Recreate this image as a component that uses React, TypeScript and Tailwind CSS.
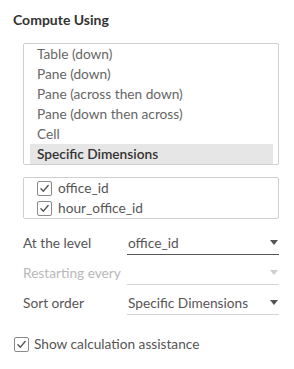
import React from "react";

const options = [
  "Table (down)",
  "Pane (down)",
  "Pane (across then down)",
  "Pane (down then across)",
  "Cell",
  "Specific Dimensions",
];

function Check() {
  return (
    <span className="flex h-[15px] w-[15px] shrink-0 items-center justify-center rounded-[2px] border border-[#8a8a8a] bg-white">
      <svg width="11" height="11" viewBox="0 0 10 10" fill="none">
        <path d="M1.8 5.2 L4 7.4 L8.3 2.3" stroke="#555" strokeWidth="1.3" strokeLinecap="round" strokeLinejoin="round" />
      </svg>
    </span>
  );
}

function Caret({ disabled }: { disabled?: boolean }) {
  return (
    <svg width="8" height="5" viewBox="0 0 8 5" className="mr-[1px]">
      <path d="M0 0 H8 L4 5 Z" fill={disabled ? "#cfcfcf" : "#555"} />
    </svg>
  );
}

function Row({
  label,
  value,
  disabled,
  active,
}: {
  label: string;
  value?: string;
  disabled?: boolean;
  active?: boolean;
}) {
  return (
    <div className="flex h-[30px] items-center">
      <span className={`w-[104px] ${disabled ? "text-[#b8b8b8]" : "text-[#555]"}`}>{label}</span>
      <div
        className={`flex h-[24px] flex-1 items-center justify-between border-b pl-[1px] ${
          active ? "border-[#555]" : "border-[#d4d4d4]"
        }`}
      >
        <span className="text-[#555]">{value}</span>
        <Caret disabled={disabled} />
      </div>
    </div>
  );
}

export default function App() {
  return (
    <div
      className="h-[369px] w-[294px] bg-white pl-[13px] pt-[12px] text-[13.7px] leading-[20px]"
      style={{ fontFamily: "Lato, 'Liberation Sans', sans-serif" }}
    >
      <h2 className="text-[14px] font-bold leading-[16px] text-[#333]">Compute Using</h2>

      <div className="ml-[10px] mr-[15px] mt-[15px]">
        {/* Compute using list */}
        <div className="h-[122px] rounded-[2px] border border-[#cfcfcf] pl-[6px] pr-[5px]">
          {options.map((o) => {
            const sel = o === "Specific Dimensions";
            return (
              <div
                key={o}
                className={`h-[20px] px-[7px] ${sel ? "bg-[#e6e6e6] font-semibold text-[#333]" : "text-[#666]"}`}
              >
                {o}
              </div>
            );
          })}
        </div>

        {/* Dimensions */}
        <div className="mt-[12px] h-[42px] rounded-[2px] border border-[#cfcfcf] pl-[13px]">
          {["office_id", "hour_office_id"].map((d) => (
            <div key={d} className="flex h-[20px] items-center gap-[6px] text-[#555]">
              <Check />
              <span>{d}</span>
            </div>
          ))}
        </div>

        <div className="mt-[9px]">
          <Row label="At the level" value="office_id" active />
          <Row label="Restarting every" disabled />
          <Row label="Sort order" value="Specific Dimensions" />
        </div>
      </div>

      <div className="mt-[16px] ml-[1px] flex h-[20px] items-center gap-[5px] text-[#555]">
        <Check />
        <span>Show calculation assistance</span>
      </div>
    </div>
  );
}
